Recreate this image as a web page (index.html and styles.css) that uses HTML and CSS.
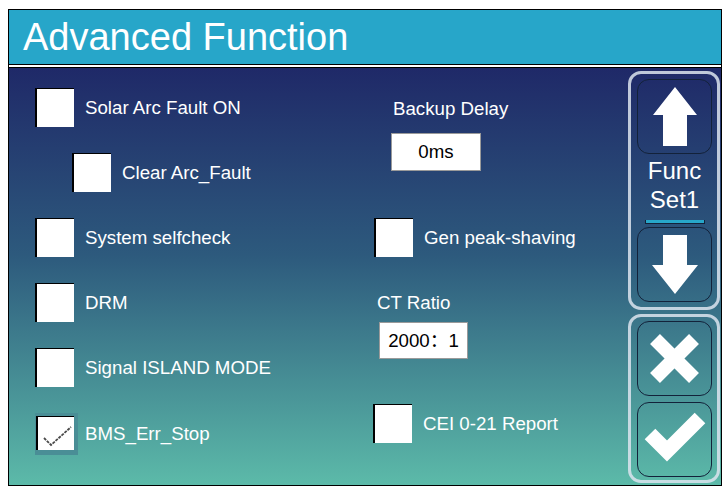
FILE: index.html
```html
<!DOCTYPE html>
<html lang="en">
<head>
    <meta charset="UTF-8">
    <title>Advanced Function</title>
    <link rel="stylesheet" href="styles.css">
</head>
<body>

<div class="frame">
    <div class="header">Advanced Function</div>
    <div class="separator"></div>

    <div class="main">
        <div class="left-col">
            <div class="option">
                <span class="box"></span>
                <span class="label">Solar Arc Fault ON</span>
            </div>
            <div class="option indent">
                <span class="box"></span>
                <span class="label">Clear Arc_Fault</span>
            </div>
            <div class="option">
                <span class="box"></span>
                <span class="label">System selfcheck</span>
            </div>
            <div class="option">
                <span class="box"></span>
                <span class="label">DRM</span>
            </div>
            <div class="option">
                <span class="box"></span>
                <span class="label">Signal ISLAND MODE</span>
            </div>
            <div class="option checked-row">
                <span class="box-halo">
                    <span class="box checked">
                        <svg viewBox="0 0 36 34" width="36" height="34">
                            <polyline points="6,21 13,28 33,10" fill="none" stroke="#4a4a4a" stroke-width="1.8" stroke-dasharray="3 1"/>
                        </svg>
                    </span>
                </span>
                <span class="label">BMS_Err_Stop</span>
            </div>
        </div>

        <div class="mid-col">
            <div class="field-label backup-label">Backup Delay</div>
            <div class="value-box backup-box">0ms</div>

            <div class="option gen-row">
                <span class="box"></span>
                <span class="label">Gen peak-shaving</span>
            </div>

            <div class="field-label ct-label">CT Ratio</div>
            <div class="value-box ct-box">2000：1</div>

            <div class="option cei-row">
                <span class="box"></span>
                <span class="label">CEI 0-21 Report</span>
            </div>
        </div>

        <div class="side">
            <div class="group nav-group">
                <div class="btn">
                    <svg viewBox="0 0 72 71" width="72" height="71">
                        <polygon points="36,6 58,34 48,34 48,65 24,65 24,34 14,34" fill="#fff"/>
                    </svg>
                </div>
                <div class="func-name">Func<br>Set1</div>
                <div class="func-bar"></div>
                <div class="btn">
                    <svg viewBox="0 0 72 71" width="72" height="71">
                        <polygon points="24,6 48,6 48,36 59,36 36,65 13,36 24,36" fill="#fff"/>
                    </svg>
                </div>
            </div>
            <div class="group action-group">
                <div class="btn">
                    <svg viewBox="0 0 72 71" width="72" height="71">
                        <line x1="16" y1="16" x2="55" y2="55" stroke="#fff" stroke-width="14"/>
                        <line x1="55" y1="16" x2="16" y2="55" stroke="#fff" stroke-width="14"/>
                    </svg>
                </div>
                <div class="btn">
                    <svg viewBox="0 0 72 71" width="72" height="71">
                        <polyline points="11,30 28,47 61,14" fill="none" stroke="#fff" stroke-width="15" stroke-linejoin="miter"/>
                    </svg>
                </div>
            </div>
        </div>
    </div>
</div>

</body>
</html>
```

FILE: styles.css
```css
body {
    margin: 0;
    background: #fff;
    font-family: "Liberation Sans", Arial, "Noto Sans CJK SC", sans-serif;
}

.frame {
    margin: 9px 0 0 8px;
    width: 712px;
    border: 1px solid #000;
}

.header {
    height: 54px;
    line-height: 54px;
    padding-left: 14px;
    background: #27a6c9;
    color: #fff;
    font-size: 38px;
    border-bottom: 1px solid #000;
}

.separator {
    height: 2px;
    background: #fff;
    border-bottom: 1px solid #000;
}

.main {
    display: flex;
    height: 417px;
    background: linear-gradient(to bottom, #1f2968 0%, #2d5a7d 45%, #5cbaa9 100%);
}

/* checkbox rows */
.left-col {
    width: 338px;
    padding: 20px 0 0 26px;
    display: flex;
    flex-direction: column;
    gap: 26px;
}

.option {
    display: flex;
    align-items: center;
    height: 39px;
}

.option.indent {
    margin-left: 37px;
}

.box {
    box-sizing: border-box;
    width: 39px;
    height: 39px;
    background: #fff;
    border-top: 1px solid #000;
    border-left: 2px solid #000;
    flex-shrink: 0;
}

.label {
    margin-left: 11px;
    color: #fff;
    font-size: 18.7px;
    line-height: 22px;
    white-space: nowrap;
}

.checked-row {
    height: 42px;
    margin-top: 0;
}

.box-halo {
    display: flex;
    padding: 3px 4px 5px 1px;
    background: #4a8e96;
}

.box.checked {
    width: 38px;
    height: 34px;
}

.box.checked svg {
    display: block;
}

.checked-row .label {
    margin-left: 7px;
}

/* middle column */
.mid-col {
    width: 255px;
    padding-top: 30px;
}

.field-label {
    color: #fff;
    font-size: 18.7px;
    line-height: 22px;
}

.backup-label {
    margin-left: 20px;
}

.value-box {
    box-sizing: border-box;
    background: #fff;
    border: 1px solid #9a9a9a;
    color: #000;
    font-size: 18.7px;
    text-align: center;
}

.backup-box {
    width: 90px;
    height: 38px;
    line-height: 36px;
    margin: 13px 0 0 18px;
}

.gen-row {
    margin: 47px 0 0 1px;
}

.ct-label {
    margin: 35px 0 0 4px;
}

.ct-box {
    width: 89px;
    height: 37px;
    line-height: 35px;
    margin: 8px 0 0 6px;
}

.cei-row {
    margin-top: 45px;
}

/* right button panel */
.side {
    width: 92px;
    padding-top: 3px;
    display: flex;
    flex-direction: column;
    gap: 4px;
}

.group {
    border: 3px solid rgba(220, 228, 238, 0.85);
    border-radius: 13px;
    padding: 5px 5px 5px 6px;
}

.action-group {
    padding: 4px 5px 3px 6px;
    display: flex;
    flex-direction: column;
    gap: 6px;
}

.btn {
    box-sizing: border-box;
    width: 75px;
    height: 75px;
    border: 1.5px solid #13223a;
    border-radius: 12px;
    display: flex;
    align-items: center;
    justify-content: center;
}

.btn svg {
    display: block;
}

.func-name {
    margin-top: 2px;
    color: #fff;
    font-size: 24px;
    line-height: 29px;
    text-align: center;
}

.func-bar {
    width: 58px;
    height: 3px;
    margin: 6px auto 3px;
    background: #27a6c9;
    border: 1px solid #13223a;
    border-width: 0 1px 1px 1px;
}
```
